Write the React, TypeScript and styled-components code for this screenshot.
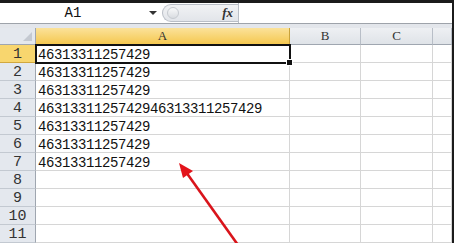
import React from 'react';
import styled, {createGlobalStyle} from 'styled-components';

const Global = createGlobalStyle`
  html, body { margin: 0; padding: 0; background: #1b1b1b; }
  body { font-family: "Liberation Mono", "Noto Sans CJK SC", monospace; }
`;

const Frame = styled.div`
  position: relative;
  width: 454px;
  height: 243px;
  overflow: hidden;
  background: #1b1b1b;
  padding: 3px 2px 0 0;
  box-sizing: border-box;
  display: flex;
  flex-direction: column;
`;

const FormulaBar = styled.div`
  display: flex;
  align-items: stretch;
  height: 20px;
  background: #fff;
  border-bottom: 1px solid #9ea3aa;
`;

const NameBox = styled.div`
  width: 146px;
  display: flex;
  align-items: center;
  justify-content: center;
  font-size: 14px;
  color: #111;
`;

const Drop = styled.div`
  width: 14px;
  display: flex;
  align-items: center;
  justify-content: center;
  &::after {
    content: '';
    border-left: 4px solid transparent;
    border-right: 4px solid transparent;
    border-top: 4px solid #333;
  }
`;

const Pill = styled.div`
  width: 76px;
  margin: 1px 0 1px 2px;
  border-radius: 10px 0 0 10px;
  border: 1px solid #b9bec6;
  border-right: none;
  background: linear-gradient(#f1f2f4, #e2e5ea);
  display: flex;
  align-items: center;
  justify-content: space-between;
  padding: 0 5px 0 4px;
  box-sizing: border-box;
`;

const Knob = styled.span`
  width: 10px;
  height: 10px;
  border-radius: 50%;
  border: 1px solid #c6cad0;
  background: linear-gradient(#f8f9fa, #d9dce1);
`;

const Fx = styled.span`
  font-family: "Liberation Serif", serif;
  font-style: italic;
  font-weight: bold;
  font-size: 13px;
  color: #333;
`;

const Input = styled.div`
  flex: 1;
  border-left: 1px solid #b9bec6;
`;

const Gap = styled.div`
  height: 4px;
  background: #e3e6eb;
`;

const Sheet = styled.div`
  flex: 1;
  display: grid;
  grid-template-columns: 36px 254px 71px 72px 1fr;
  grid-template-rows: 17px;
  grid-auto-rows: 18px;
  background: #fff;
`;

const Corner = styled.div`
  background: #e4e8ee;
  border-right: 1px solid #9fa6b0;
  border-bottom: 1px solid #9fa6b0;
  position: relative;
  &::after {
    content: '';
    position: absolute;
    right: 3px;
    bottom: 3px;
    border-left: 9px solid transparent;
    border-bottom: 9px solid #c4c9d1;
  }
`;

const ColHead = styled.div<{$sel?: boolean}>`
  display: flex;
  align-items: center;
  justify-content: center;
  font-family: "Liberation Serif", serif;
  font-size: 13px;
  color: #333;
  background: ${p => p.$sel
    ? 'linear-gradient(#fbe29a, #f5c850)'
    : 'linear-gradient(#eef0f3, #dfe3e8)'};
  border-right: 1px solid ${p => p.$sel ? '#c9a23a' : '#b8bec7'};
  border-bottom: 1px solid ${p => p.$sel ? '#c99a2e' : '#9fa6b0'};
`;

const RowHead = styled.div<{$sel?: boolean}>`
  display: flex;
  align-items: center;
  justify-content: center;
  font-size: 15px;
  padding-top: 2px;
  box-sizing: border-box;
  color: #333;
  background: ${p => p.$sel ? '#f8d66e' : '#e4e8ee'};
  border-right: 1px solid #9fa6b0;
  border-bottom: 1px solid ${p => p.$sel ? '#d1a83f' : '#c3c9d1'};
`;

const Cell = styled.div<{$sel?: boolean}>`
  position: relative;
  border-right: 1px solid #d6d6d6;
  border-bottom: 1px solid #d6d6d6;
  font-size: 14px;
  letter-spacing: -0.4px;
  line-height: 20px;
  padding-left: 2px;
  color: #111;
  white-space: nowrap;
  overflow: visible;
  z-index: ${p => p.$sel ? 2 : 1};
  ${p => p.$sel && `
    outline: 2px solid #111;
    outline-offset: -1px;
    &::after {
      content: '';
      position: absolute;
      right: -4px;
      bottom: -4px;
      width: 5px;
      height: 5px;
      background: #111;
      border: 1px solid #fff;
    }
  `}
`;

const Arrow = styled.svg`
  position: absolute;
  left: 0;
  top: 0;
  pointer-events: none;
  z-index: 5;
`;

const data: Record<number, string> = {
  1: '46313311257429',
  2: '46313311257429',
  3: '46313311257429',
  4: '4631331125742946313311257429',
  5: '46313311257429',
  6: '46313311257429',
  7: '46313311257429',
};

export default function App() {
  const rows = Array.from({length: 11}, (_, i) => i + 1);
  return (
    <Frame>
      <Global />
      <FormulaBar>
        <NameBox>A1</NameBox>
        <Drop />
        <Pill>
          <Knob />
          <Fx>fx</Fx>
        </Pill>
        <Input />
      </FormulaBar>
      <Gap />
      <Sheet>
        <Corner />
        <ColHead $sel>A</ColHead>
        <ColHead>B</ColHead>
        <ColHead>C</ColHead>
        <ColHead />
        {rows.map(r => (
          <React.Fragment key={r}>
            <RowHead $sel={r === 1}>{r}</RowHead>
            <Cell $sel={r === 1}>{data[r] ?? ''}</Cell>
            <Cell />
            <Cell />
            <Cell />
          </React.Fragment>
        ))}
      </Sheet>
      <Arrow width="454" height="243" viewBox="0 0 454 243">
        <line x1="238" y1="245" x2="186" y2="172" stroke="#d9141b" strokeWidth="2.6" />
        <polygon points="179,163 193,171 183,178" fill="#e3141b" />
      </Arrow>
    </Frame>
  );
}
